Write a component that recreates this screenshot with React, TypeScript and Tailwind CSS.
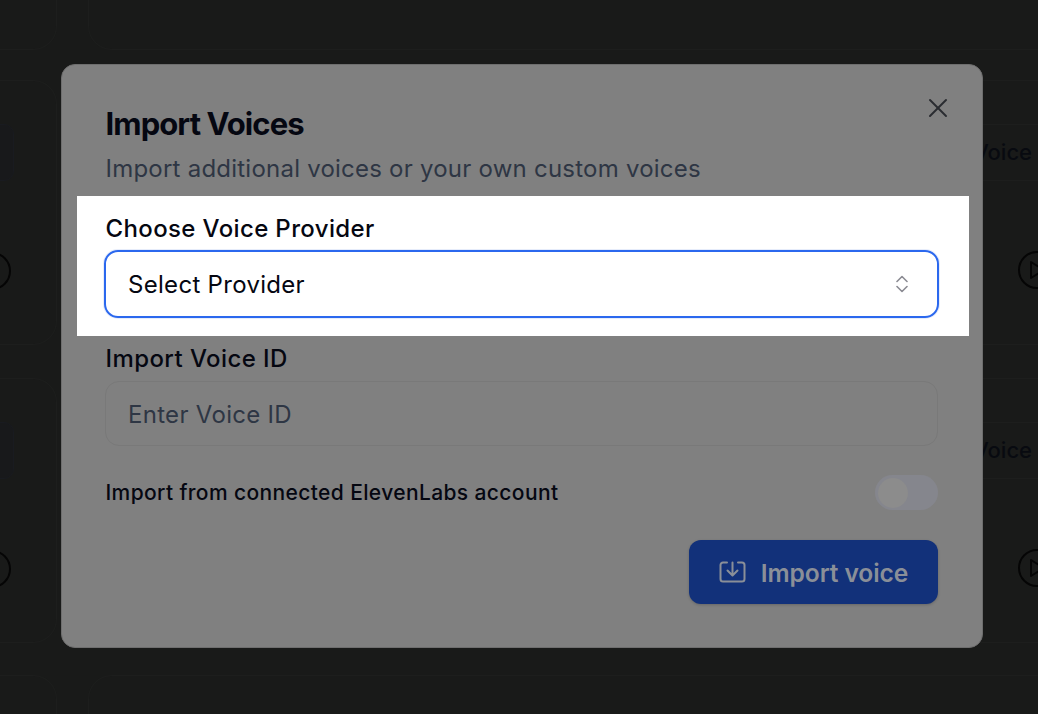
import React from "react";
import { X } from "lucide-react";

function Play() {
  return (
    <div className="flex h-[38px] w-[38px] shrink-0 items-center justify-center rounded-full border-2 border-[#050505]">
      <svg width="18" height="20" viewBox="0 0 18 20" fill="none" stroke="#050505" strokeWidth="2" strokeLinejoin="round">
        <path d="M3 2v16l13-8z" />
      </svg>
    </div>
  );
}

function LeftCard({ className }: { className: string }) {
  return (
    <div className={`flex h-[265px] w-[57px] shrink-0 flex-col items-end rounded-br-[24px] rounded-tr-[24px] border-r border-t border-b border-[#1d1e1d] pt-[43px] ${className}`}>
      <div className="mr-[42px] h-[57px] w-[60px] shrink-0 rounded-[10px] border border-[#191b20] bg-[#18191b]" />
      <div className="mr-[45px] mt-[71px] shrink-0">
        <Play />
      </div>
    </div>
  );
}

function RightCard({ className }: { className: string }) {
  return (
    <div className={`ml-[31px] flex h-[265px] w-[1000px] shrink-0 flex-col rounded-[24px] border border-[#1d1e1d] pt-[43px] ${className}`}>
      <div className="flex h-[57px] shrink-0 items-center justify-end border-y border-[#1d1e1d] pr-[55px] text-[22px] font-medium text-[#080a10]">
        Voice
      </div>
      <div className="mt-[70px] flex justify-end pr-[31px]">
        <Play />
      </div>
    </div>
  );
}

export default function App() {
  return (
    <div className="relative h-[714px] w-[1038px] overflow-hidden bg-[#191a19] font-[Inter,sans-serif]">
      <div className="flex h-[714px] flex-col">
        <div className="-mt-[30px] flex h-[80px] shrink-0">
          <div className="w-[57px] shrink-0 rounded-br-[24px] border-b border-r border-[#1d1e1d]" />
          <div className="ml-[31px] w-[1000px] shrink-0 rounded-bl-[24px] border-b border-l border-[#1d1e1d]" />
        </div>
        <div className="flex shrink-0">
          <LeftCard className="mt-[30px]" />
          <RightCard className="mt-[30px]" />
        </div>
        <div className="flex shrink-0">
          <LeftCard className="mt-[33px]" />
          <RightCard className="mt-[33px]" />
        </div>
        <div className="mt-[32px] flex h-[60px] shrink-0">
          <div className="w-[57px] shrink-0 rounded-tr-[24px] border-r border-t border-[#1d1e1d]" />
          <div className="ml-[31px] w-[1000px] shrink-0 rounded-tl-[24px] border-l border-t border-[#1d1e1d]" />
        </div>
      </div>

      <div className="absolute left-[61px] top-[64px] flex h-[584px] w-[922px] flex-col rounded-[14px] border border-[#6e6e6e] bg-[#808080] pl-[43.5px] pr-[44px]">
        <button className="absolute right-[28px] top-[27px] text-[#2a2c31]" aria-label="Close">
          <X size={32} strokeWidth={1.5} />
        </button>
        <h2 className="mt-[39px] text-[31px] font-bold leading-[40px] tracking-[-0.93px] text-[#050711]">Import Voices</h2>
        <p className="mt-[11px] text-2xl leading-[28px] tracking-[0.23px] text-[#2e3644]">Import additional voices or your own custom voices</p>

        <div className="-ml-[28.5px] -mr-[31px] mt-[13px] h-[140px] shrink-0 bg-white pl-[28px] pr-[31px] pt-[19px]">
          <label className="ml-[0.5px] block text-2xl font-medium leading-[28px] tracking-[0.37px] text-[#050711]">Choose Voice Provider</label>
          <button className="-ml-[1px] mt-[7px] flex h-[68px] w-[835px] items-center justify-between rounded-[14px] border-2 border-[#2b68ee] pl-[22px] pr-[29px] text-2xl tracking-[0.3px] text-[#050711] shadow-[0_0_0_1px_#e6ecfa]">
            <span className="mt-[2px]">Select Provider</span>
            <svg width="12" height="18" viewBox="0 0 12 18" fill="none" stroke="#8b8b93" strokeWidth="1.6" strokeLinecap="round" strokeLinejoin="round">
              <path d="M1 6.5l5-5 5 5" />
              <path d="M1 11.5l5 5 5-5" />
            </svg>
          </button>
        </div>

        <label className="mt-[9px] block text-2xl font-medium leading-[28px] tracking-[0.42px] text-[#050711]">Import Voice ID</label>
        <input
          placeholder="Enter Voice ID"
          className="-ml-[0.5px] mt-[8px] h-[65px] w-[833px] rounded-[14px] border-[1.5px] border-[#797979] bg-transparent pl-[22px] pt-[2px] text-2xl tracking-[0.3px] text-[#050711] outline-none placeholder:text-[#2e3644]"
        />

        <div className="mt-[29px] flex items-center justify-between">
          <span className="text-[21px] font-medium leading-[35px] tracking-[0.38px] text-[#050711]">Import from connected ElevenLabs account</span>
          <div className="flex h-[35px] w-[63px] items-center rounded-full bg-[#85868d] p-[3px]">
            <div className="h-[30px] w-[30px] rounded-full bg-[#8c8c8c]" />
          </div>
        </div>

        <div className="mt-[30px] flex justify-end">
          <button className="flex h-[64px] w-[249px] items-center justify-center gap-[15px] rounded-[12px] bg-[#12317a] text-[24.6px] font-semibold tracking-[-0.1px] text-[#8a8f98] shadow-[0_1px_3px_rgba(0,0,0,0.2)]">
            <svg width="27" height="22" viewBox="0 0 27 22" fill="none" stroke="currentColor" strokeWidth="2" strokeLinecap="round" strokeLinejoin="round">
              <path d="M8 1.5H4A2.5 2.5 0 0 0 1.5 4v14A2.5 2.5 0 0 0 4 20.5h19a2.5 2.5 0 0 0 2.5-2.5V4A2.5 2.5 0 0 0 23 1.5h-4" />
              <path d="M13.5 1.5v12M8.5 9.5l5 5 5-5" />
            </svg>
            <span className="mt-[2px]">Import voice</span>
          </button>
        </div>
      </div>
    </div>
  );
}
